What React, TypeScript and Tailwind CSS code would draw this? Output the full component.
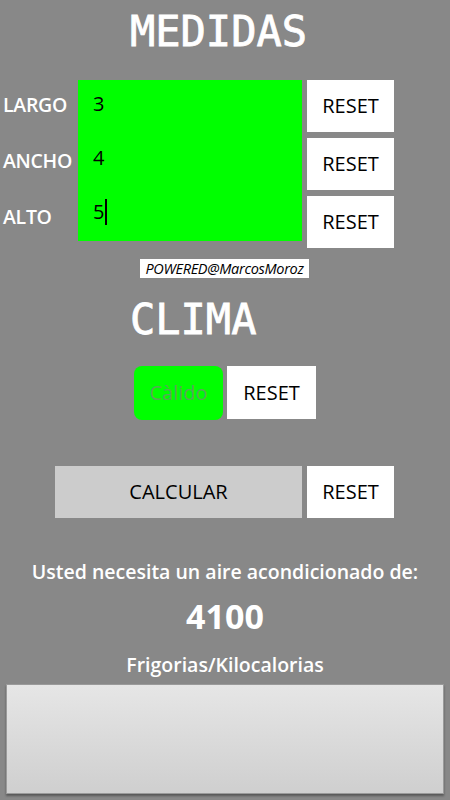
import React from 'react';

const sans = { fontFamily: '"Open Sans", "Noto Sans", sans-serif' };

const ResetButton: React.FC<{ className?: string }> = ({ className = '' }) => (
  <button className={`w-[87px] h-[52px] bg-white text-black text-[20px] flex items-center justify-center ${className}`}>
    RESET
  </button>
);

export default function App() {
  return (
    <div className="w-[450px] h-[800px] bg-[#888888] overflow-hidden flex flex-col" style={sans}>
      {/* Medidas */}
      <h1 className="pt-[8px] pl-[130px] h-[80px] text-[42px] leading-[48px] text-white font-['DejaVu_Sans_Mono',monospace] [-webkit-text-stroke:0.8px_white]">
        MEDIDAS
      </h1>

      <div className="flex">
        <div className="w-[78px] flex flex-col pl-[3px] pt-[12px] gap-[30px] text-white text-[19.5px] font-semibold leading-[26px] tracking-[-0.3px]">
          <span>LARGO</span>
          <span>ANCHO</span>
          <span>ALTO</span>
        </div>
        <div className="w-[224px] h-[161px] bg-[#00ff00] flex flex-col pl-[15px] pt-[11px] gap-[28px] text-black text-[20px] leading-[26px]">
          <span>3</span>
          <span>4</span>
          <span className="flex items-center">5<span className="w-[2px] h-[26px] bg-black ml-[1px]" /></span>
        </div>
        <div className="flex flex-col ml-[5px] gap-[6px]">
          <ResetButton />
          <ResetButton />
          <ResetButton />
        </div>
      </div>

      <div className="flex mt-[11px] pl-[140px]">
        <span className="w-[169px] h-[19px] bg-white text-black italic text-[14.5px] leading-[19px] text-center tracking-[-0.3px]">
          POWERED@MarcosMoroz
        </span>
      </div>

      {/* Clima */}
      <h2 className="mt-[18px] pl-[130px] text-[42px] leading-[48px] text-white font-['DejaVu_Sans_Mono',monospace] [-webkit-text-stroke:0.8px_white]">
        CLIMA
      </h2>

      <div className="flex mt-[22px] pl-[134px] gap-[4px]">
        <button className="w-[89px] h-[54px] rounded-[8px] bg-[#00ff00] text-[#5aa65a] text-[20px] flex items-center justify-center">
          Càlido
        </button>
        <ResetButton className="w-[89px] h-[53px]" />
      </div>

      <div className="flex mt-[46px] pl-[55px] gap-[5px]">
        <button className="w-[247px] h-[52px] bg-[#cccccc] text-black text-[20px] flex items-center justify-center">
          CALCULAR
        </button>
        <ResetButton />
      </div>

      {/* Resultado */}
      <div className="flex flex-col items-center text-white mt-[40px]">
        <p className="text-[19.5px] font-semibold leading-[28px]">Usted necesita un aire acondicionado de:</p>
        <p className="mt-[10px] text-[34px] font-bold leading-[40px]">4100</p>
        <p className="mt-[15px] text-[19.5px] font-semibold leading-[28px]">Frigorias/Kilocalorias</p>
      </div>

      <div className="mx-[6px] mt-[5px] h-[110px] border border-[#9a9a9a] shadow-[0_2px_2px_rgba(0,0,0,0.35)] bg-gradient-to-b from-[#e6e6e6] to-[#cfcfcf]" />
    </div>
  );
}
